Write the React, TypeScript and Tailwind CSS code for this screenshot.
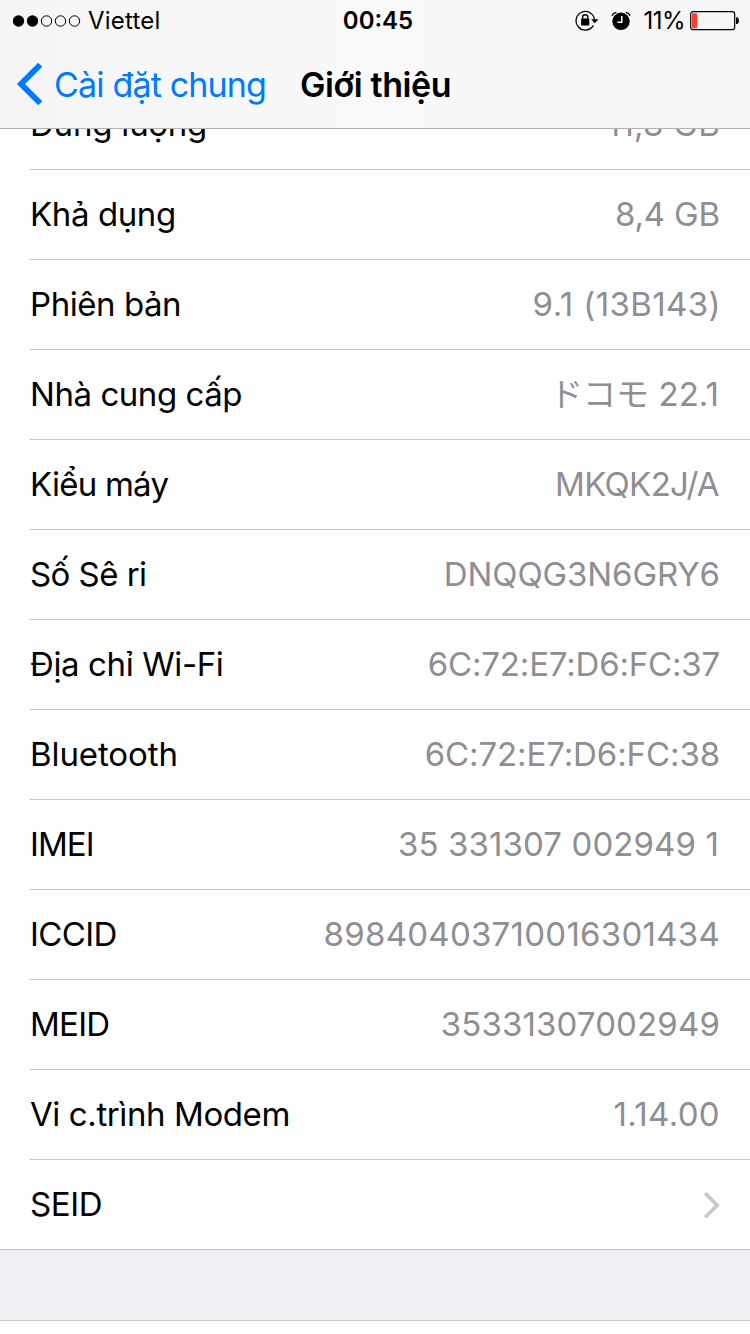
type Row = { label: string; value: string; labelClass: string; valueClass: string };

const rows: Row[] = [
  { label: 'Dung lượng', value: '11,8 GB', labelClass: 'tracking-[-0.2px]', valueClass: 'tracking-[0.25px]' },
  { label: 'Khả dụng', value: '8,4 GB', labelClass: 'tracking-[-0.4px]', valueClass: 'tracking-[-0.15px]' },
  { label: 'Phiên bản', value: '9.1 (13B143)', labelClass: 'tracking-[-0.45px]', valueClass: 'tracking-[0.4px] -mr-px' },
  { label: 'Nhà cung cấp', value: 'ドコモ 22.1', labelClass: 'tracking-[-0.45px]', valueClass: 'tracking-[0.05px] mr-px' },
  { label: 'Kiểu máy', value: 'MKQK2J/A', labelClass: 'tracking-[-0.75px]', valueClass: 'tracking-[-0.65px] mr-px' },
  { label: 'Số Sê ri', value: 'DNQQG3N6GRY6', labelClass: 'tracking-[-0.55px]', valueClass: 'tracking-[-0.1px]' },
  { label: 'Địa chỉ Wi-Fi', value: '6C:72:E7:D6:FC:37', labelClass: 'tracking-[-0.38px]', valueClass: 'tracking-[-0.18px]' },
  { label: 'Bluetooth', value: '6C:72:E7:D6:FC:38', labelClass: 'tracking-[-0.1px]', valueClass: 'tracking-[-0.1px]' },
  { label: 'IMEI', value: '35 331307 002949 1', labelClass: 'tracking-[-0.9px]', valueClass: 'tracking-[0.1px] mr-px' },
  { label: 'ICCID', value: '89840403710016301434', labelClass: 'tracking-[-0.6px]', valueClass: 'tracking-[0.26px]' },
  { label: 'MEID', value: '35331307002949', labelClass: 'tracking-[-0.75px]', valueClass: 'tracking-[0.14px]' },
  { label: 'Vi c.trình Modem', value: '1.14.00', labelClass: 'tracking-[-0.4px]', valueClass: 'tracking-[0.35px]' },
];

function SignalDots() {
  return (
    <svg width="68" height="12" viewBox="0 0 68 12" className="mr-[7px] shrink-0">
      <circle cx="5.5" cy="6" r="5.7" />
      <circle cx="19.5" cy="6" r="5.7" />
      {[33.5, 47.5, 61.5].map((cx) => (
        <circle key={cx} cx={cx} cy="6" r="5.2" fill="none" stroke="#000" strokeWidth="1" />
      ))}
    </svg>
  );
}

function RotationLock() {
  return (
    <svg width="24" height="22" viewBox="0 0 24 22" className="shrink-0">
      <path d="M18.4 15.4A9.3 9.3 0 1 1 19.6 9.8" fill="none" stroke="#000" strokeWidth="1.3" />
      <path d="M16.2 9.3h7.2l-3.6 3.9z" />
      <path d="M7.6 9.5V7.3a2.6 2.6 0 0 1 5.2 0v2.2" fill="none" stroke="#000" strokeWidth="1.4" />
      <rect x="6.1" y="8.6" width="8.2" height="6.8" rx="0.6" />
    </svg>
  );
}

function Alarm() {
  return (
    <svg width="20" height="20" viewBox="0 0 20 20" className="shrink-0">
      <circle cx="10" cy="10.3" r="8.7" />
      <path d="M0.9 4.8Q2 1.9 5.4 1.3M14.6 1.3Q18 1.9 19.1 4.8" fill="none" stroke="#000" strokeWidth="1.3" />
      <path d="M10.8 5v6.3H6.4" fill="none" stroke="#f8f8f8" strokeWidth="1.5" />
    </svg>
  );
}

function Battery() {
  return (
    <svg width="50" height="20" viewBox="0 0 50 20" className="shrink-0">
      <rect x="0.7" y="0.7" width="44" height="18" rx="2.5" fill="none" stroke="#000" strokeWidth="1.2" />
      <rect x="2" y="2.2" width="5" height="15" rx="0.8" fill="#ff3b30" />
      <path d="M46 6.3h1.2q1.8 1 1.8 3.4t-1.8 3.4H46z" />
    </svg>
  );
}

export default function App() {
  return (
    <div className="flex h-[1334px] w-[750px] flex-col overflow-hidden bg-white font-['Inter','Noto_Sans_CJK_JP',sans-serif] text-[33px] text-black">
      <header className="flex h-[129px] shrink-0 flex-col border-b border-[#b2b2b2] bg-linear-to-r from-[#f5f5f5] via-[#f9f9f9] to-[#f6f6f6]">
        <div className="grid h-[41px] grid-cols-3 items-center text-[24px]">
          <div className="flex items-center pl-[13px]">
            <SignalDots />
            <span className="tracking-[0.2px]">Viettel</span>
          </div>
          <span className="pl-[6px] text-center font-semibold">00:45</span>
          <div className="flex items-center justify-end pr-[10px]">
            <RotationLock />
            <div className="ml-3">
              <Alarm />
            </div>
            <span className="ml-3 tracking-[-0.5px]">11%</span>
            <div className="ml-[5px]">
              <Battery />
            </div>
          </div>
        </div>
        <div className="flex h-[86px] items-center pl-[16px] text-[34px]">
          <svg width="28" height="44" viewBox="0 0 28 44" className="mr-[10px] shrink-0">
            <path d="M24.2 2.8 5 22 24.2 41.2" fill="none" stroke="#007aff" strokeWidth="5.8" />
          </svg>
          <span className="w-[246px] tracking-[-0.83px] text-[#007aff]">Cài đặt chung</span>
          <span className="font-semibold tracking-[-0.4px]">Giới thiệu</span>
        </div>
      </header>
      <main className="shrink-0 overflow-hidden border-b border-[#c8c7cc]">
        <div className="-mt-[49px] pl-[30px]">
          {rows.map((row) => (
            <div key={row.label} className="flex h-[90px] items-center justify-between border-b border-[#c8c7cc] pr-[30px]">
              <span className={row.labelClass}>{row.label}</span>
              <span className={`text-[#8e8e93] ${row.valueClass}`}>{row.value}</span>
            </div>
          ))}
          <div className="flex h-[89px] items-center justify-between pr-[29px]">
            <span className="tracking-[-0.4px]">SEID</span>
            <svg width="18" height="28" viewBox="0 0 18 28">
              <path d="M2.2 2.2 14.2 14.2 2.2 26.2" fill="none" stroke="#c7c7cc" strokeWidth="3.6" />
            </svg>
          </div>
        </div>
      </main>
      <div className="h-[71px] shrink-0 border-b border-[#c8c7cc] bg-[#efeff4]" />
    </div>
  );
}
